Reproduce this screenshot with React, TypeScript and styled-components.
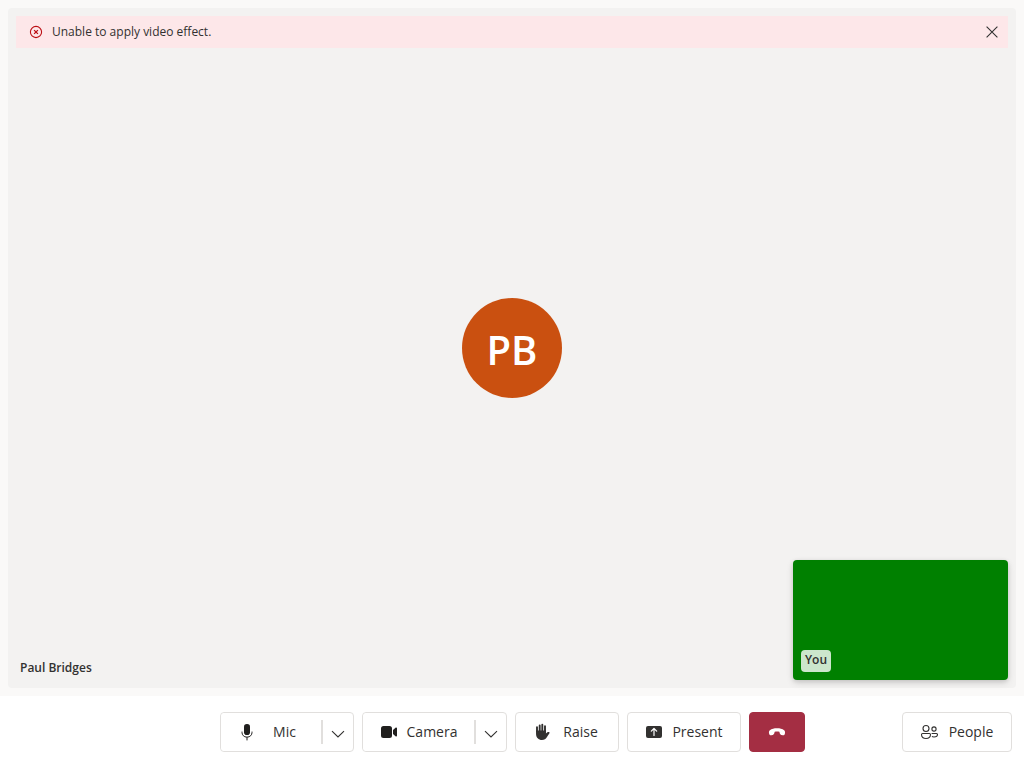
import React from "react";
import styled, { createGlobalStyle } from "styled-components";

const GlobalStyle = createGlobalStyle`
  *, *::before, *::after { box-sizing: border-box; }
  body { margin: 0; background: #ffffff; }
  body, button { font-family: "Open Sans", "Noto Sans", sans-serif; }
`;

const Screen = styled.div`
  display: flex;
  flex-direction: column;
  min-height: 100vh;
  color: #323130;
`;

const MediaArea = styled.main`
  flex: 1;
  display: flex;
  padding: 8px;
  background: #faf9f8;
`;

const RemoteTile = styled.section`
  flex: 1;
  display: grid;
  grid-template-rows: 1fr auto 1fr;
  position: relative;
  padding: 8px;
  border-radius: 4px;
  background: #f3f2f1;
`;

const ErrorBar = styled.div`
  align-self: start;
  display: flex;
  align-items: center;
  height: 32px;
  padding: 0 8px 0 12px;
  gap: 8px;
  background: #fde7e9;
`;

const ErrorText = styled.span`
  flex: 1;
  font-size: 12px;
  line-height: 16px;
`;

const DismissButton = styled.button`
  display: flex;
  padding: 0;
  border: 0;
  background: transparent;
  color: #323130;
  cursor: pointer;
`;

const Avatar = styled.div`
  display: flex;
  align-items: center;
  justify-content: center;
  justify-self: center;
  width: 100px;
  height: 100px;
  padding-top: 4px;
  border-radius: 50%;
  background: #ca5010;
  color: #ffffff;
  font-size: 40px;
  font-weight: 600;
  line-height: 48px;
`;

const RemoteName = styled.div`
  align-self: end;
  padding: 4px;
  font-size: 12px;
  font-weight: 600;
  line-height: 16px;
`;

const LocalTile = styled.section`
  position: absolute;
  right: 8px;
  bottom: 8px;
  display: flex;
  align-items: flex-end;
  width: 215px;
  height: 120px;
  padding: 8px;
  border-radius: 4px;
  background: #008000;
  box-shadow: 0 1px 4px rgba(0, 0, 0, 0.11), 0 3px 7px rgba(0, 0, 0, 0.13);
`;

const LocalName = styled.span`
  padding: 2px 4px 4px;
  border-radius: 4px;
  background: rgba(255, 255, 255, 0.8);
  font-size: 12px;
  font-weight: 600;
  line-height: 16px;
`;

const ControlBar = styled.footer`
  display: grid;
  grid-template-columns: 1fr auto 1fr;
  align-items: center;
  height: 72px;
  padding: 0 12px;
  background: #ffffff;
`;

const CallControls = styled.div`
  grid-column: 2;
  display: flex;
  gap: 8px;
`;

const SideControls = styled.div`
  display: flex;
  justify-content: flex-end;
`;

const ControlButton = styled.button<{ $width: number }>`
  display: flex;
  align-items: center;
  width: ${(p) => p.$width}px;
  height: 40px;
  padding: 0 16px;
  gap: 8px;
  border: 1px solid #e1dfdd;
  border-radius: 4px;
  background: #ffffff;
  color: #323130;
  font-size: 14px;
  line-height: 20px;
  cursor: pointer;
`;

const ControlLabel = styled.span`
  flex: 1;
  text-align: center;
`;

const HangUpButton = styled(ControlButton)`
  justify-content: center;
  border-color: #a42e43;
  background: #a42e43;
  color: #ffffff;
`;

const SplitControl = styled.div`
  display: flex;
  align-items: center;
  height: 40px;
  border: 1px solid #e1dfdd;
  border-radius: 4px;
  background: #ffffff;
`;

const SplitMain = styled(ControlButton)`
  height: 38px;
  border: 0;
`;

const Divider = styled.span`
  width: 2px;
  height: 24px;
  background: #e1dfdd;
`;

const SplitMenu = styled.button`
  display: flex;
  align-items: center;
  justify-content: center;
  width: 30px;
  height: 38px;
  padding: 4px 0 0;
  border: 0;
  background: transparent;
  color: #323130;
  cursor: pointer;
`;

const Glyph = styled.svg.attrs({ "aria-hidden": true })<{ $size?: number }>`
  display: block;
  flex: none;
  width: ${(p) => p.$size ?? 20}px;
  height: ${(p) => p.$size ?? 20}px;
`;

const ErrorIcon = () => (
  <Glyph $size={16} viewBox="0 0 16 16" fill="none" stroke="#bc0f14">
    <circle cx="8" cy="8" r="5.6" strokeWidth="1.1" />
    <path d="M6.1 6.1l3.8 3.8M9.9 6.1L6.1 9.9" strokeWidth="1.3" />
  </Glyph>
);

const CloseIcon = () => (
  <Glyph $size={16} viewBox="0 0 16 16" fill="none" stroke="currentColor" strokeWidth="1.1">
    <path d="M2.6 2.6l10.8 10.8M13.4 2.6L2.6 13.4" />
  </Glyph>
);

const MicIcon = () => (
  <Glyph viewBox="0 0 20 20">
    <rect x="7" y="2" width="6" height="11" rx="2.8" fill="#201f1e" />
    <path d="M5 10v.5a4.6 4.6 0 0 0 4.6 4.6h.8a4.6 4.6 0 0 0 4.6-4.6V10M10 15.2V18" fill="none" stroke="#201f1e" strokeLinecap="round" />
  </Glyph>
);

const CameraIcon = () => (
  <Glyph viewBox="0 0 20 20" fill="#201f1e">
    <path d="M13 6.5A2.5 2.5 0 0 0 10.5 4h-6A2.5 2.5 0 0 0 2 6.5v7A2.5 2.5 0 0 0 4.5 16h6a2.5 2.5 0 0 0 2.5-2.5v-7zM14 7.900v4.200l2.800 2.300c.5.400 1.200.1 1.200-.6V6.200c0-.700-.700-1-1.200-.600L14 7.900z" />
  </Glyph>
);

const HandIcon = () => (
  <Glyph viewBox="0 0 20 20">
    <path d="M5 9.500V5.300M7.700 9V3.500M10.300 9V2.700M13 10V4.200" fill="none" stroke="#323130" strokeWidth="1.900" strokeLinecap="round" />
    <path d="M4.050 8.500h9.900v3.100c.7-1 1.700-1.700 2.900-1.600.7.050 1 .7.600 1.200-1.200 1.400-1.900 2.900-2.800 4.300-.9 1.500-2.200 2.500-4.700 2.500-3.400 0-5.900-2.400-5.900-6V8.500z" fill="#323130" />
  </Glyph>
);

const PresentIcon = () => (
  <Glyph viewBox="0 0 20 20">
    <rect x="2" y="4" width="16" height="12" rx="2" fill="#323130" />
    <path d="M10 13.500v-7M7.300 9.200L10 6.500l2.700 2.700" fill="none" stroke="#ffffff" strokeWidth="1.200" strokeLinecap="round" strokeLinejoin="round" />
  </Glyph>
);

const HangUpIcon = () => (
  <Glyph viewBox="0 0 20 20" fill="currentColor">
    <path d="M18 10.900l-.2 1c-.2.900-1 1.500-1.900 1.300l-1.700-.3c-.7-.1-1.200-.6-1.400-1.300l-.4-1.800c-.8-.3-1.600-.4-2.400-.4s-1.500.1-2.300.4l-.5 1.800c-.2.700-.7 1.200-1.400 1.300l-1.600.3c-.9.200-1.700-.4-2-1.300l-.2-1c-.2-1 .1-2 .9-2.700C4.700 6.800 7.100 6.200 10 6.200c3 0 5.300.6 7.100 2 .8.700 1.100 1.700.9 2.700z" />
  </Glyph>
);

const PeopleIcon = () => (
  <Glyph viewBox="0 0 20 20" fill="none" stroke="#323130" strokeWidth="1.100">
    <circle cx="7" cy="6.500" r="3" />
    <circle cx="15" cy="7" r="2.100" />
    <path d="M3.600 11.500h6.800c.6 0 1.100.5 1.100 1.100 0 2.500-1.700 3.900-4.500 3.900s-4.500-1.400-4.500-3.900c0-.600.500-1.100 1.100-1.100zM12.600 11.500h4.900c.6 0 1 .4 1 1 0 1.600-1.200 2.500-3.500 2.500-.8 0-1.500-.1-2.100-.4" />
  </Glyph>
);

const ChevronIcon = () => (
  <Glyph $size={16} viewBox="0 0 16 16" fill="none" stroke="currentColor" strokeWidth="1.100">
    <path d="M2 5.200l6 5.800 6-5.800" />
  </Glyph>
);

interface SplitProps {
  label: string;
  menuLabel: string;
  width: number;
  icon: React.ReactNode;
}

const SplitButton = ({ label, menuLabel, width, icon }: SplitProps) => (
  <SplitControl>
    <SplitMain type="button" $width={width}>
      {icon}
      <ControlLabel>{label}</ControlLabel>
    </SplitMain>
    <Divider />
    <SplitMenu type="button" aria-label={menuLabel}>
      <ChevronIcon />
    </SplitMenu>
  </SplitControl>
);

export default function App() {
  return (
    <Screen>
      <GlobalStyle />
      <MediaArea>
        <RemoteTile aria-label="Paul Bridges">
          <ErrorBar role="alert">
            <ErrorIcon />
            <ErrorText>Unable to apply video effect.</ErrorText>
            <DismissButton type="button" aria-label="Close">
              <CloseIcon />
            </DismissButton>
          </ErrorBar>
          <Avatar>PB</Avatar>
          <RemoteName>Paul Bridges</RemoteName>
          <LocalTile aria-label="Your video">
            <LocalName>You</LocalName>
          </LocalTile>
        </RemoteTile>
      </MediaArea>
      <ControlBar>
        <CallControls>
          <SplitButton label="Mic" menuLabel="Microphone options" width={100} icon={<MicIcon />} />
          <SplitButton label="Camera" menuLabel="Camera options" width={111} icon={<CameraIcon />} />
          <ControlButton type="button" $width={104}>
            <HandIcon />
            <ControlLabel>Raise</ControlLabel>
          </ControlButton>
          <ControlButton type="button" $width={114}>
            <PresentIcon />
            <ControlLabel>Present</ControlLabel>
          </ControlButton>
          <HangUpButton type="button" $width={56} aria-label="Leave">
            <HangUpIcon />
          </HangUpButton>
        </CallControls>
        <SideControls>
          <ControlButton type="button" $width={110}>
            <PeopleIcon />
            <ControlLabel>People</ControlLabel>
          </ControlButton>
        </SideControls>
      </ControlBar>
    </Screen>
  );
}
